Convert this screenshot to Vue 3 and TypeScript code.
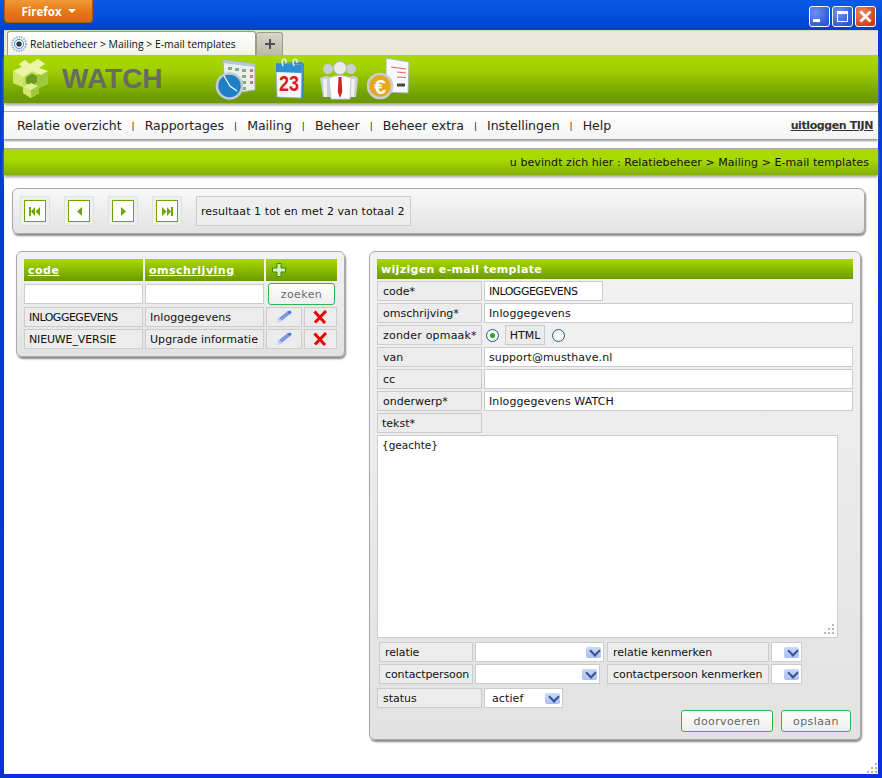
<script setup lang="ts">
const menu: string[] = ['Relatie overzicht', 'Rapportages', 'Mailing', 'Beheer', 'Beheer extra', 'Instellingen', 'Help']
const rows = [
  { code: 'INLOGGEGEVENS', desc: 'Inloggegevens', tight: 'tight-a' },
  { code: 'NIEUWE_VERSIE', desc: 'Upgrade informatie', tight: 'tight-b' },
]
const fields = [
  { label: 'code*', value: 'INLOGGEGEVENS', short: true },
  { label: 'omschrijving*', value: 'Inloggegevens', short: false },
]
const fields2 = [
  { label: 'van', value: 'support@musthave.nl' },
  { label: 'cc', value: '' },
  { label: 'onderwerp*', value: 'Inloggegevens WATCH' },
]
</script>

<template>
  <div class="window">
    <div class="titlebar">
      <div class="ffbtn">Firefox <i class="caret"></i></div>
      <div class="controls">
        <div class="ctl"><span class="min"></span></div>
        <div class="ctl"><span class="max"></span></div>
        <div class="ctl close">
          <svg width="15" height="15" viewBox="0 0 15 15"><path d="M2.500 2.500l10 10M12.500 2.500l-10 10" stroke="#fff" stroke-width="2.600"/></svg>
        </div>
      </div>
    </div>
    <div class="client">
      <div class="tabbar">
        <div class="tab">
          <svg class="favicon" width="16" height="16" viewBox="0 0 16 16">
            <circle cx="8" cy="8" r="7" fill="none" stroke="#8fb4e2" stroke-width="2" stroke-dasharray="1.500 1"/>
            <circle cx="8" cy="8" r="4.600" fill="#e8eef6" stroke="#5a8fcc"/>
            <circle cx="8" cy="8" r="2.600" fill="#2c3540"/>
          </svg>
          <span>Relatiebeheer &gt; Mailing &gt; E-mail templates</span>
        </div>
        <div class="newtab">
          <svg width="12" height="12" viewBox="0 0 12 12"><path d="M6 1v10M1 6h10" stroke="#46505c" stroke-width="2"/></svg>
        </div>
      </div>
      <div class="page">
        <header class="head">
          <svg class="logo" width="40" height="40" viewBox="0 0 40 40">
            <path d="M3 12l9-4-3-3 6-4 5 4 8-5 7 5-6 4 9 3v13l-9 4v5l-8 5-8-5v-6L3 24z" fill="#c4df5e"/>
            <path d="M24 17l14-5v13l-9 4v5l-8 5V28z" fill="#a0c93c"/>
            <path d="M3 12l10 6v10L3 24zM13 26l8 4v9l-8-5z" fill="#d0e670"/>
            <path d="M3 12l9-4-3-3 6-4 5 4 8-5 7 5-6 4 9 3-7 4-9-4-9 6z" fill="#eaf5a8"/>
            <path d="M16 18l6-3.500 5 2.500v6l-6 4-5-3z" fill="#6f9a20"/>
            <path d="M13 28l8-4 7 3-7 4z" fill="#e0f096"/>
          </svg>
          <div class="brand">WATCH</div>
          <div class="apps">
            <svg class="a1" width="42" height="44" viewBox="0 0 42 44">
              <path d="M8 3l32 4v26l-21 3L9 20z" fill="#e9eef2" stroke="#9fb1bd"/>
              <path d="M8 3l32 4v3L8 6z" fill="#b8c6cf"/>
              <g fill="#7fb56a"><rect x="13" y="10" width="4" height="3"/><rect x="20" y="11" width="4" height="3"/><rect x="27" y="12" width="4" height="3"/></g>
              <g fill="#d9756f"><rect x="35" y="12" width="3" height="3"/><rect x="35" y="18" width="3" height="3"/><rect x="35" y="24" width="3" height="3"/></g>
              <g fill="#7fb56a"><rect x="27" y="18" width="4" height="3"/><rect x="27" y="24" width="4" height="3"/><rect x="27" y="30" width="4" height="3"/></g>
              <circle cx="14.500" cy="29" r="12.500" fill="#1f7fc4" stroke="#c0ccd4" stroke-width="2.600"/>
              <path d="M9 19l6 10 7 5" fill="none" stroke="#fff" stroke-width="1.200"/>
            </svg>
            <svg class="a2" width="30" height="44" viewBox="0 0 30 44">
              <path d="M1 6l26-1 2 2v33l-2 1H2z" fill="#2f8ed2"/>
              <path d="M1 6l26 2-1 33-24-1z" fill="#f5f7f8" stroke="#9eb0bb" stroke-width=".8"/>
              <path d="M1 6l26 2-.3 8L1 15z" fill="#2f8ed2"/>
              <path d="M8 9c-3-8 4-9 3-3M19 9c-3-8 4-9 3-3" fill="none" stroke="#e2edf5" stroke-width="1.500"/>
              <text x="14" y="34" text-anchor="middle" class="day" textLength="20" lengthAdjust="spacingAndGlyphs">23</text>
            </svg>
            <svg class="a3" width="38" height="44" viewBox="0 0 38 44">
              <g fill="#c9cfd2"><circle cx="8" cy="12" r="5"/><circle cx="31" cy="12" r="5"/><path d="M0 21q8-4 12 0v19H3zM26 21q8-4 12 0l-2 19H26z"/></g>
              <g fill="#eef0f1"><path d="M3 22h4v18H4zM31 22h4l-1 18h-3z"/></g>
              <circle cx="20" cy="11" r="6.500" fill="#e8ebec" stroke="#b4bcc0"/>
              <path d="M9 21q11-5 22 0l-1 21H11z" fill="#fff" stroke="#c3cacd"/>
              <path d="M18.500 20h3l.7 15-2.200 6-2.200-6z" fill="#d42020"/>
            </svg>
            <svg class="a4" width="44" height="44" viewBox="0 0 44 44">
              <path d="M19 1l23 4-1 31-22-1z" fill="#f8f9fa" stroke="#aab4ba"/>
              <path d="M24 10l15 2M30 15l9 1M30 20l9 .5" stroke="#d66" stroke-width="1"/>
              <path d="M30 28h8" stroke="#444" stroke-width="3"/>
              <circle cx="13" cy="29" r="12" fill="#e9a71f" stroke="#c9ced1" stroke-width="2.600"/>
              <text x="13" y="37" text-anchor="middle" class="euro">€</text>
            </svg>
          </div>
        </header>
        <nav class="nav">
          <template v-for="(m, i) in menu" :key="m">
            <span v-if="i" class="sep">|</span>
            <span class="navitem">{{ m }}</span>
          </template>
          <a class="logout">uitloggen TIJN</a>
        </nav>
        <div class="crumb">u bevindt zich hier : Relatiebeheer &gt; Mailing &gt; E-mail templates</div>

        <section class="panel pager">
          <div class="pbtn"><b><svg width="12" height="9" viewBox="0 0 12 9"><path d="M0 0h2v9H0zM6 0v9L2 4.500zM11 0v9L6.500 4.500z" fill="#6fa500"/></svg></b></div>
          <div class="pbtn"><b><svg width="5" height="9" viewBox="0 0 5 9"><path d="M5 0v9L0 4.500z" fill="#6fa500"/></svg></b></div>
          <div class="pbtn"><b><svg width="5" height="9" viewBox="0 0 5 9"><path d="M0 0v9l5-4.500z" fill="#6fa500"/></svg></b></div>
          <div class="pbtn"><b><svg width="12" height="9" viewBox="0 0 12 9"><path d="M12 0h-2v9h2zM6 0v9l4-4.500zM1 0v9l4.500-4.500z" fill="#6fa500"/></svg></b></div>
          <div class="result">resultaat 1 tot en met 2 van totaal 2</div>
        </section>

        <div class="columns">
          <section class="panel list">
            <div class="lgrid">
              <a class="th">code</a>
              <a class="th">omschrijving</a>
              <div class="th plus">
                <svg width="14" height="14" viewBox="0 0 14 14"><path d="M5 .5h4v4.500h4.500v4H9v4.500H5V9H.5V5H5z" fill="#d8f0c0" stroke="#3d8a10"/></svg>
              </div>
              <div class="inp"></div>
              <div class="inp"></div>
              <div class="btn zoek">zoeken</div>
              <template v-for="r in rows" :key="r.code">
                <div class="cell" :class="r.tight">{{ r.code }}</div>
                <div class="cell">{{ r.desc }}</div>
                <div class="cell icon">
                  <svg width="16" height="14" viewBox="0 0 16 14"><path d="M3 10.500L13 2.500" stroke="#7a96e8" stroke-width="3.600"/><path d="M3.500 8l2.500 3-5 2.500z" fill="#c4d0f4"/><path d="M11.500 1.500l3-1 1 2-1.500 2z" fill="#4f6fd8"/></svg>
                </div>
                <div class="cell icon">
                  <svg width="15" height="14" viewBox="0 0 15 14"><path d="M1.500 1.500l10.500 11.500M13 1L2 12.500" stroke="#f00000" stroke-width="3"/></svg>
                </div>
              </template>
            </div>
          </section>

          <section class="panel form">
            <h2 class="ftitle">wijzigen e-mail template</h2>
            <div class="frow" v-for="f in fields" :key="f.label">
              <div class="lab">{{ f.label }}</div>
              <div class="val" :class="{ short: f.short, 'tight-a': f.short }">{{ f.value }}</div>
            </div>
            <div class="frow">
              <div class="lab wide">zonder opmaak*</div>
              <span class="radio on"></span>
              <div class="lab html">HTML</div>
              <span class="radio"></span>
            </div>
            <div class="frow" v-for="f in fields2" :key="f.label">
              <div class="lab">{{ f.label }}</div>
              <div class="val">{{ f.value }}</div>
            </div>
            <div class="frow"><div class="lab tekst">tekst*</div></div>
            <div class="area">
              {geachte}
              <svg class="grip" width="12" height="12" viewBox="0 0 12 12"><g fill="#b8b8b8"><rect x="9" y="1" width="2" height="2"/><rect x="5" y="5" width="2" height="2"/><rect x="9" y="5" width="2" height="2"/><rect x="1" y="9" width="2" height="2"/><rect x="5" y="9" width="2" height="2"/><rect x="9" y="9" width="2" height="2"/></g></svg>
            </div>
            <div class="ins">
              <div class="lab l1">relatie</div>
              <div class="sel s1"><i class="arrow"></i></div>
              <div class="lab l2">relatie kenmerken</div>
              <div class="sel s3"><i class="arrow"></i></div>
            </div>
            <div class="ins">
              <div class="lab l1">contactpersoon</div>
              <div class="sel s2"><i class="arrow"></i></div>
              <div class="lab l2">contactpersoon kenmerken</div>
              <div class="sel s3"><i class="arrow"></i></div>
            </div>
            <div class="frow status">
              <div class="lab">status</div>
              <div class="sel s4">actief<i class="arrow"></i></div>
            </div>
            <div class="actions">
              <div class="btn door">doorvoeren</div>
              <div class="btn ops">opslaan</div>
            </div>
          </section>
        </div>
        <svg class="wingrip" width="12" height="12" viewBox="0 0 12 12"><g fill="#b0b0b0"><rect x="9" y="1" width="2" height="2"/><rect x="5" y="5" width="2" height="2"/><rect x="9" y="5" width="2" height="2"/><rect x="1" y="9" width="2" height="2"/><rect x="5" y="9" width="2" height="2"/><rect x="9" y="9" width="2" height="2"/></g></svg>
      </div>
    </div>
  </div>
</template>

<style>
html, body { margin: 0; padding: 0; }
</style>

<style scoped>
* { box-sizing: border-box; }
.window {
  width: 882px; height: 778px; display: flex; flex-direction: column; overflow: hidden;
  background: linear-gradient(#0a5ae6 0, #0453e0 12px, #0040d0 30px, #0831d9 100%);
  font-family: "DejaVu Sans", Verdana, sans-serif; font-size: 11px; color: #111;
}
.titlebar { height: 30px; flex: none; display: flex; justify-content: space-between; align-items: flex-start; padding: 0 4px; }
.ffbtn {
  width: 89px; height: 23px; border: 1px solid #a85a10; border-top: 0; border-radius: 0 0 4px 4px;
  background: linear-gradient(#f09a3a, #e57a18 50%, #d96a0a);
  color: #fff; font: bold 11.500px "Open Sans", "DejaVu Sans", sans-serif; display: flex; align-items: center; justify-content: center; gap: 6px;
}
.caret { border: 4px solid transparent; border-top: 4px solid #fff; border-bottom: 0; }
.controls { display: flex; gap: 2px; margin: 6px 2px 0 0; }
.ctl {
  width: 21px; height: 21px; border: 1px solid #fff; border-radius: 3px;
  background: radial-gradient(circle at 30% 30%, #6f93ee, #2a55d6 80%);
  display: flex; align-items: center; justify-content: center;
}
.close { background: radial-gradient(circle at 30% 30%, #ee8a6c, #cf3a16 80%); }
.min { width: 7px; height: 3px; background: #fff; margin: 8px 6px 0 0; }
.max { width: 11px; height: 11px; border: 1px solid #fff; border-top-width: 3px; }
.client { flex: 1; margin: 0 4px 4px; display: flex; flex-direction: column; background: #fff; min-height: 0; }
.tabbar { height: 25px; flex: none; background: #ebe7d9; display: flex; align-items: flex-end; padding-left: 3px; border-top: 1px solid #d9d5c4; }
.tab {
  width: 249px; height: 24px; background: linear-gradient(#fff, #f4f2ea); border: 1px solid #9c9b92; border-bottom: 0;
  border-radius: 3px 3px 0 0; display: flex; align-items: center; padding-left: 3px; gap: 3px;
  font: 10.400px "Open Sans", "Liberation Sans", sans-serif; color: #111; white-space: nowrap;
}
.favicon { flex: none; }
.newtab {
  width: 27px; height: 23px; background: linear-gradient(#d9d6c8, #bdbaac); border: 1px solid #9c9b92; border-bottom: 0;
  border-radius: 3px 3px 0 0; display: flex; align-items: center; justify-content: center;
}
.page { flex: 1; background: #fff; position: relative; min-height: 0; }
.head {
  height: 48px; background: linear-gradient(#a9d900 0, #a2d000 30%, #6f9f00 85%, #69980a); display: flex; align-items: center;
  box-shadow: 0 2px 3px #999; padding-left: 6px;
}
.logo { flex: none; }
.brand { font: bold 28px "Liberation Sans", Arial, sans-serif; color: #666b63; margin-left: 12px; width: 153px; }
.apps { display: flex; align-items: center; }
.a2 { margin-left: 18px; }
.a3 { margin-left: 15px; }
.a4 { margin-left: 9px; }
.day { font: bold 22px "Liberation Sans", sans-serif; fill: #d91a1a; }
.euro { font: bold 21px "Liberation Sans", sans-serif; fill: #fff; }
.nav {
  margin-top: 8px; height: 28px; border-top: 1px solid #aaa; background: linear-gradient(#fff, #f4f4f4);
  box-shadow: 0 2px 2px #999; display: flex; align-items: center; padding: 0 5px 0 13px; font-size: 12.500px; color: #222;
}
.sep { font-size: 9px; margin: 0 10px 0 10px; }
.logout { margin-left: auto; font-size: 11px; font-weight: bold; text-decoration: underline; color: #333; letter-spacing: -.4px; }
.crumb {
  margin-top: 9px; height: 27px; border-top: 1px solid #aaa; background: linear-gradient(#a9da00 40%, #7fb000);
  box-shadow: 0 2px 3px #999; display: flex; align-items: center; justify-content: flex-end; padding: 1px 9px 0 0; color: #111; letter-spacing: .07px;
}
.panel {
  background: linear-gradient(#f2f2f2, #e2e2e2); border: 1px solid #aaa; border-radius: 6px; box-shadow: 1px 2px 2px #888;
}
.pager {
  margin: 13px 0 0 8px; width: 853px; height: 46px; display: flex; align-items: center; padding-left: 7px; gap: 14px; background: linear-gradient(#f8f8f8, #e2e2e2);
}
.pbtn { width: 30px; height: 30px; background: #eee; border: 1px solid #e2e2e2; display: flex; align-items: center; justify-content: center; }
.pbtn b { width: 22px; height: 22px; border: 1px solid #6fa500; background: #fff; display: flex; align-items: center; justify-content: center; }
.result { height: 30px; padding: 1px 4px 0; border: 1px solid #ccc; background: #eee; display: flex; align-items: center; letter-spacing: .07px; white-space: nowrap; width: 215px; }
.columns { display: flex; align-items: flex-start; margin-top: 17px; margin-left: 12px; gap: 24px; }
.list { width: 329px; height: 106px; padding: 7px 7px 0 7px; }
.lgrid { display: grid; grid-template-columns: 119px 119px 36px 33px; gap: 2px; grid-template-rows: 22px 22px 20px 20px; }
.th {
  background: linear-gradient(#a9d900, #6a9a00); color: #fff; font-weight: bold; font-size: 11px; text-decoration: underline;
  padding-left: 4px; display: flex; align-items: center; letter-spacing: .5px;
}
.plus { grid-column: span 2; text-decoration: none; padding-left: 6px; }
.inp { background: #fff; border: 1px solid #ccc; height: 20px; margin-top: 1px; }
.btn {
  border: 1px solid #2db84a; border-radius: 3px; background: linear-gradient(#fff, #eee); color: #666; display: flex; align-items: center; justify-content: center;
  letter-spacing: .4px;
}
.zoek { grid-column: span 2; width: 67px; height: 22px; margin-left: 2px; }
.cell { background: #ececec; border: 1px solid #ccc; padding: 1px 0 0 4px; display: flex; align-items: center; white-space: nowrap; overflow: hidden; letter-spacing: .05px; }
.cell.icon { justify-content: center; padding: 0; }
.cell.tight-a, .val.tight-a { letter-spacing: -.5px; }
.cell.tight-b { letter-spacing: -.15px; }
.form { width: 492px; height: 489px; padding: 7px 7px 0 7px; }
.ftitle { margin: 0 0 2px; height: 20px; background: linear-gradient(#a9d900, #6a9a00); color: #fff; font-size: 11px; font-weight: bold; padding-left: 4px; line-height: 21px; letter-spacing: .33px; }
.frow { display: flex; align-items: center; gap: 2px; height: 20px; margin-bottom: 2px; }
.lab { width: 105px; height: 20px; flex: none; background: #ececec; border: 1px solid #ccc; padding-left: 5px; display: flex; align-items: center; white-space: nowrap; }
.lab.wide { letter-spacing: .2px; }
.val { width: 369px; height: 20px; background: #fff; border: 1px solid #ccc; padding-left: 4px; display: flex; align-items: center; letter-spacing: .1px; }
.val.short { width: 119px; }
.radio { width: 13px; height: 13px; border-radius: 50%; border: 1px solid #2a5a86; background: radial-gradient(#fff, #eee); margin: 0 0 0 2px; display: inline-flex; align-items: center; justify-content: center; }
.radio.on::after { content: ""; width: 5px; height: 5px; border-radius: 50%; background: #2ca02c; }
.lab.html { width: 40px; padding: 0; justify-content: center; margin: 0 3px 0 4px; }
.tekst { padding-left: 4px; }
.area { position: relative; width: 461px; height: 203px; background: #fff; border: 1px solid #ccc; padding: 3px 4px; margin-bottom: 4px; font-size: 10.500px; margin-top: 2px; }
.grip { position: absolute; right: 2px; bottom: 2px; }
.ins { display: flex; align-items: center; height: 20px; margin: 0 0 2px 2px; }
.l1 { width: 94px; letter-spacing: -.1px; }
.l2 { width: 162px; letter-spacing: -.05px; }
.sel { height: 20px; background: #fff; border: 1px solid #ccc; display: flex; align-items: center; justify-content: flex-end; padding-right: 2px; }
.s1 { width: 129px; margin: 0 3px 0 2px; }
.s2 { width: 125px; margin: 0 7px 0 2px; }
.s3 { width: 31px; margin-left: 2px; }
.s4 { width: 79px; justify-content: space-between; padding-left: 7px; letter-spacing: .1px; }
.arrow { width: 15px; height: 11px; border-radius: 2px; background: linear-gradient(#c8d8f8, #a9c0f0); display: inline-block; position: relative; }
.arrow::after {
  content: ""; position: absolute; left: 4.500px; top: 0; width: 6px; height: 6px; border-right: 2px solid #36528f; border-bottom: 2px solid #36528f; transform: rotate(45deg);
}
.status { margin-top: 4px; }
.actions { display: flex; justify-content: flex-end; gap: 8px; padding-right: 2px; }
.door { width: 92px; height: 22px; }
.ops { width: 70px; height: 22px; }
.wingrip { position: absolute; right: 0; bottom: 0; }
</style>
